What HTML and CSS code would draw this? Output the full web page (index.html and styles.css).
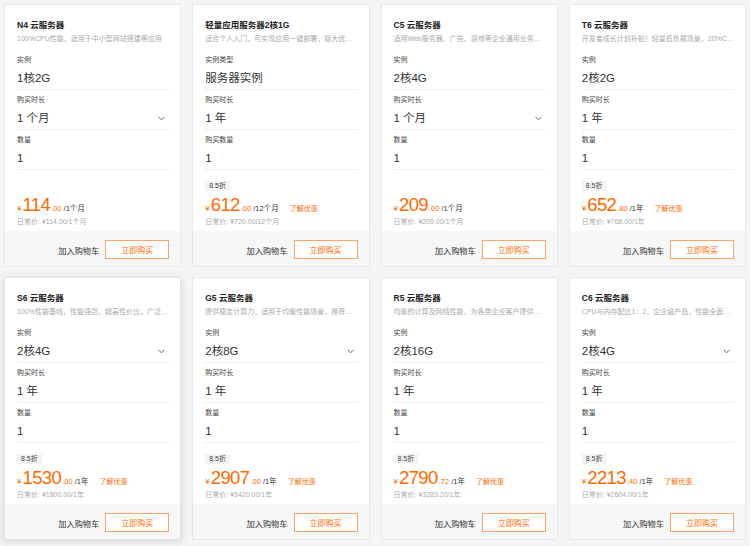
FILE: index.html
```html
<!DOCTYPE html>
<html lang="zh">
<head>
<meta charset="utf-8">
<title>云服务器</title>
<link rel="stylesheet" href="styles.css">
</head>
<body>
<div class="grid">

  <div class="card">
    <div class="body">
      <div class="title">N4 云服务器</div>
      <div class="sub">100%CPU性能，适用于中小型网站搭建等应用</div>
      <div class="field"><div class="label">实例</div><div class="value">1核2G</div></div>
      <div class="field"><div class="label">购买时长</div><div class="value"><span>1 个月</span><svg class="chev" viewBox="0 0 8 5"><path d="M0.5 0.5 L4 4 L7.5 0.5"/></svg></div></div>
      <div class="field"><div class="label">数量</div><div class="value">1</div></div>
      <div class="price-block">
        <div class="tag hidden">8.5折</div>
        <div class="price"><span class="yen">¥</span><span class="num">114</span><span class="dec">.00</span><span class="unit">/1个月</span></div>
        <div class="daily">日常价: ¥114.00/1个月</div>
      </div>
    </div>
    <div class="foot"><span class="cart">加入购物车</span><span class="buy">立即购买</span></div>
  </div>

  <div class="card">
    <div class="body">
      <div class="title">轻量应用服务器2核1G</div>
      <div class="sub">适合个人入门，可实现应用一键部署，极大优…</div>
      <div class="field"><div class="label">实例类型</div><div class="value">服务器实例</div></div>
      <div class="field"><div class="label">购买时长</div><div class="value">1 年</div></div>
      <div class="field"><div class="label">购买数量</div><div class="value">1</div></div>
      <div class="price-block">
        <div class="tag">8.5折</div>
        <div class="price"><span class="yen">¥</span><span class="num">612</span><span class="dec">.00</span><span class="unit">/12个月</span><span class="promo">了解优惠</span></div>
        <div class="daily">日常价: ¥720.00/12个月</div>
      </div>
    </div>
    <div class="foot"><span class="cart">加入购物车</span><span class="buy">立即购买</span></div>
  </div>

  <div class="card">
    <div class="body">
      <div class="title">C5 云服务器</div>
      <div class="sub">适用Web服务器、广告、游戏等企业通用业务…</div>
      <div class="field"><div class="label">实例</div><div class="value">2核4G</div></div>
      <div class="field"><div class="label">购买时长</div><div class="value"><span>1 个月</span><svg class="chev" viewBox="0 0 8 5"><path d="M0.5 0.5 L4 4 L7.5 0.5"/></svg></div></div>
      <div class="field"><div class="label">数量</div><div class="value">1</div></div>
      <div class="price-block">
        <div class="tag hidden">8.5折</div>
        <div class="price"><span class="yen">¥</span><span class="num">209</span><span class="dec">.00</span><span class="unit">/1个月</span></div>
        <div class="daily">日常价: ¥209.00/1个月</div>
      </div>
    </div>
    <div class="foot"><span class="cart">加入购物车</span><span class="buy">立即购买</span></div>
  </div>

  <div class="card">
    <div class="body">
      <div class="title">T6 云服务器</div>
      <div class="sub">开发者成长计划补贴！轻量低负载场景，20%C…</div>
      <div class="field"><div class="label">实例</div><div class="value">2核2G</div></div>
      <div class="field"><div class="label">购买时长</div><div class="value">1 年</div></div>
      <div class="field"><div class="label">数量</div><div class="value">1</div></div>
      <div class="price-block">
        <div class="tag">8.5折</div>
        <div class="price"><span class="yen">¥</span><span class="num">652</span><span class="dec">.80</span><span class="unit">/1年</span><span class="promo">了解优惠</span></div>
        <div class="daily">日常价: ¥768.00/1年</div>
      </div>
    </div>
    <div class="foot"><span class="cart">加入购物车</span><span class="buy">立即购买</span></div>
  </div>

  <div class="card active">
    <div class="body">
      <div class="title">S6 云服务器</div>
      <div class="sub">100%性能基线，性能强劲，超高性价比，广泛…</div>
      <div class="field"><div class="label">实例</div><div class="value"><span>2核4G</span><svg class="chev" viewBox="0 0 8 5"><path d="M0.5 0.5 L4 4 L7.5 0.5"/></svg></div></div>
      <div class="field"><div class="label">购买时长</div><div class="value">1 年</div></div>
      <div class="field"><div class="label">数量</div><div class="value">1</div></div>
      <div class="price-block">
        <div class="tag">8.5折</div>
        <div class="price"><span class="yen">¥</span><span class="num">1530</span><span class="dec">.00</span><span class="unit">/1年</span><span class="promo">了解优惠</span></div>
        <div class="daily">日常价: ¥1800.00/1年</div>
      </div>
    </div>
    <div class="foot"><span class="cart">加入购物车</span><span class="buy">立即购买</span></div>
  </div>

  <div class="card">
    <div class="body">
      <div class="title">G5 云服务器</div>
      <div class="sub">提供稳定计算力，适用于均衡性能场景，推荐…</div>
      <div class="field"><div class="label">实例</div><div class="value"><span>2核8G</span><svg class="chev" viewBox="0 0 8 5"><path d="M0.5 0.5 L4 4 L7.5 0.5"/></svg></div></div>
      <div class="field"><div class="label">购买时长</div><div class="value">1 年</div></div>
      <div class="field"><div class="label">数量</div><div class="value">1</div></div>
      <div class="price-block">
        <div class="tag">8.5折</div>
        <div class="price"><span class="yen">¥</span><span class="num">2907</span><span class="dec">.00</span><span class="unit">/1年</span><span class="promo">了解优惠</span></div>
        <div class="daily">日常价: ¥3420.00/1年</div>
      </div>
    </div>
    <div class="foot"><span class="cart">加入购物车</span><span class="buy">立即购买</span></div>
  </div>

  <div class="card">
    <div class="body">
      <div class="title">R5 云服务器</div>
      <div class="sub">均衡的计算及网络性能，为各类企业客户提供…</div>
      <div class="field"><div class="label">实例</div><div class="value">2核16G</div></div>
      <div class="field"><div class="label">购买时长</div><div class="value">1 年</div></div>
      <div class="field"><div class="label">数量</div><div class="value">1</div></div>
      <div class="price-block">
        <div class="tag">8.5折</div>
        <div class="price"><span class="yen">¥</span><span class="num">2790</span><span class="dec">.72</span><span class="unit">/1年</span><span class="promo">了解优惠</span></div>
        <div class="daily">日常价: ¥3283.20/1年</div>
      </div>
    </div>
    <div class="foot"><span class="cart">加入购物车</span><span class="buy">立即购买</span></div>
  </div>

  <div class="card">
    <div class="body">
      <div class="title">C6 云服务器</div>
      <div class="sub">CPU与内存配比1：2，企业级产品，性能全面…</div>
      <div class="field"><div class="label">实例</div><div class="value"><span>2核4G</span><svg class="chev" viewBox="0 0 8 5"><path d="M0.5 0.5 L4 4 L7.5 0.5"/></svg></div></div>
      <div class="field"><div class="label">购买时长</div><div class="value">1 年</div></div>
      <div class="field"><div class="label">数量</div><div class="value">1</div></div>
      <div class="price-block">
        <div class="tag">8.5折</div>
        <div class="price"><span class="yen">¥</span><span class="num">2213</span><span class="dec">.40</span><span class="unit">/1年</span><span class="promo">了解优惠</span></div>
        <div class="daily">日常价: ¥2604.00/1年</div>
      </div>
    </div>
    <div class="foot"><span class="cart">加入购物车</span><span class="buy">立即购买</span></div>
  </div>

</div>
</body>
</html>
```

FILE: styles.css
```css
* { box-sizing: border-box; }
html, body { margin: 0; padding: 0; }
body {
  background: #f5f5f5;
  font-family: "Liberation Sans", "Noto Sans CJK SC", sans-serif;
  color: #333;
  width: 750px;
  height: 546px;
  overflow: hidden;
}
.grid {
  display: grid;
  grid-template-columns: repeat(4, 1fr);
  column-gap: 11px;
  row-gap: 10px;
  padding: 4px;
}
.card {
  background: #fff;
  border: 1px solid #e9e9e9;
  display: flex;
  flex-direction: column;
}
.card.active {
  box-shadow: 0 1px 8px rgba(0, 0, 0, 0.14);
  border-color: #e4e4e4;
}
.body {
  padding: 14px 11px 0 12px;
}
.title {
  font-size: 8.5px;
  font-weight: bold;
  line-height: 12px;
  height: 12px;
  color: #222;
  white-space: nowrap;
}
.sub {
  margin-top: 3px;
  font-size: 7px;
  line-height: 10px;
  height: 10px;
  color: #aaa;
  white-space: nowrap;
  overflow: hidden;
  margin-bottom: 6px;
}
.field {
  padding: 5px 0 3px;
  border-bottom: 1px solid #efefef;
}
.label {
  font-size: 7px;
  line-height: 10px;
  height: 10px;
  color: #444;
}
.value {
  margin-top: 5px;
  font-size: 11.5px;
  line-height: 16px;
  height: 16px;
  color: #333;
  display: flex;
  align-items: center;
  justify-content: space-between;
}
.chev {
  width: 7px;
  height: 5px;
  margin-right: 4px;
  fill: none;
  stroke: #555;
  stroke-width: 1;
}
.price-block {
  display: flex;
  flex-direction: column;
  align-items: flex-start;
  padding-top: 11px;
  padding-bottom: 4px;
}
.tag {
  height: 10px;
  line-height: 10px;
  padding: 0 4px;
  font-size: 7px;
  background: #f3f3f3;
  color: #444;
}
.tag.hidden { visibility: hidden; }
.price {
  margin-top: 3px;
  height: 22px;
  display: flex;
  align-items: baseline;
  color: #ff6a00;
  white-space: nowrap;
}
.yen {
  font-size: 8px;
  margin-right: 1px;
}
.num {
  font-size: 18.5px;
  letter-spacing: -0.6px;
  line-height: 22px;
}
.dec {
  font-size: 7.5px;
  margin-left: 1px;
}
.unit {
  font-size: 7.5px;
  color: #333;
  margin-left: 2px;
}
.promo {
  font-size: 7px;
  color: #ff6a00;
  margin-left: 11px;
}
.daily {
  margin-top: 1px;
  font-size: 7px;
  line-height: 10px;
  height: 10px;
  color: #aaa;
  white-space: nowrap;
}
.foot {
  background: #f7f7f7;
  height: 35px;
  display: flex;
  align-items: center;
  justify-content: flex-end;
  padding: 2px 11px 0 0;
}
.cart {
  font-size: 8.2px;
  color: #333;
  margin-right: 6px;
}
.buy {
  width: 64px;
  height: 19px;
  border: 1px solid #ffa366;
  color: #ff6a00;
  font-size: 8px;
  display: flex;
  align-items: center;
  justify-content: center;
  background: #fff;
}
```
